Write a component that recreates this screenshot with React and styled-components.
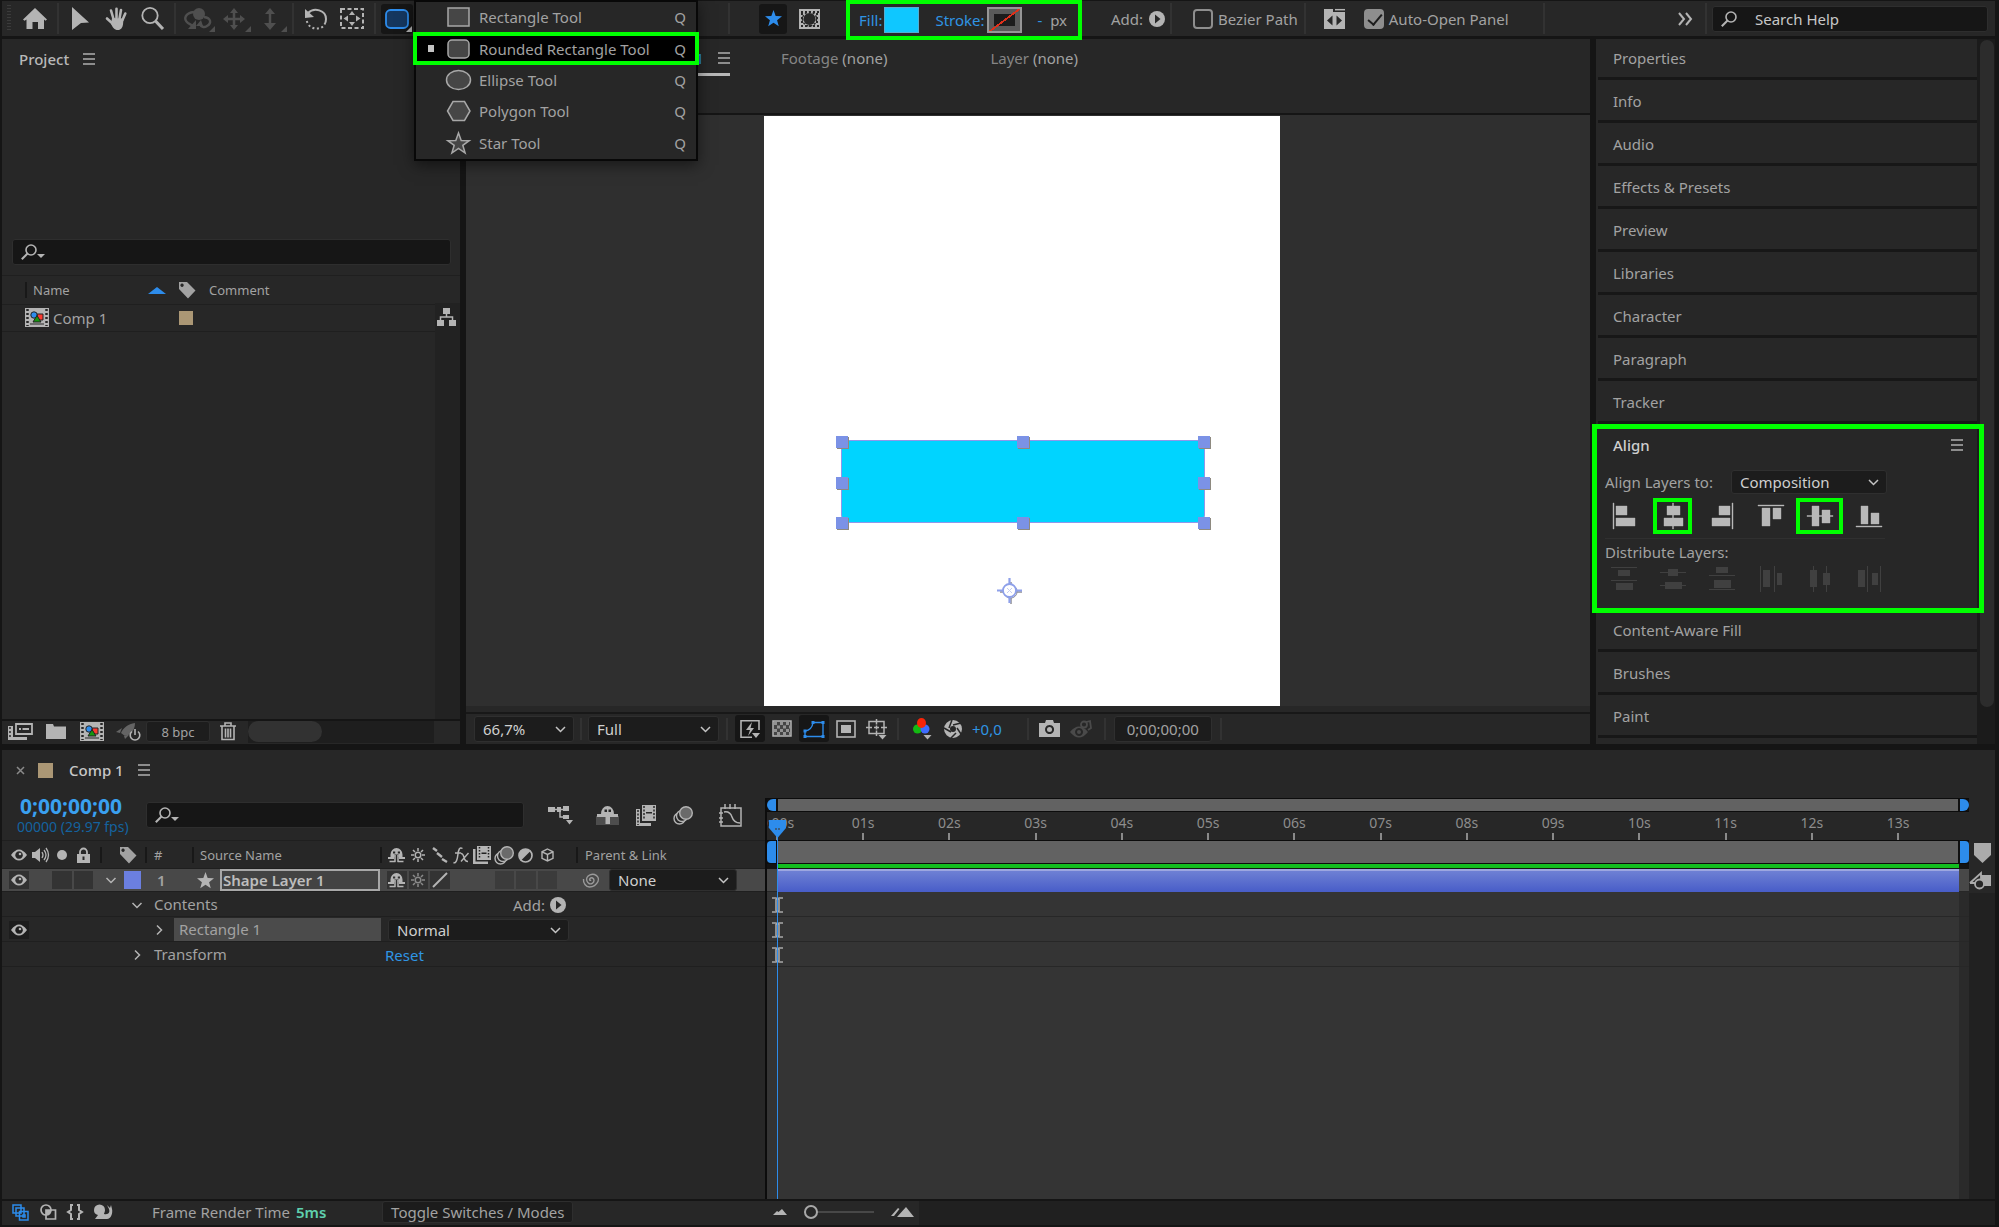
import React, { useState } from 'react';
import styled, { createGlobalStyle, css } from 'styled-components';

const GlobalStyle = createGlobalStyle`
  * { box-sizing: border-box; }
  body { margin: 0; background: #151515; }
  body, button, input, select, table {
    font-family: "Noto Sans", "Open Sans", sans-serif;
    font-size: 15px;
    line-height: 20px;
    color: #a2a2a2;
  }
  button { padding: 0; border: 0; background: none; }
  a { text-decoration: none; }
`;

const BLUE = '#2d8ceb';
const GREEN = '#00ff00';

/* ===== shared parts ===== */

const Svg = styled.svg`
  display: block;
  flex: none;
  overflow: visible;
`;

function Icon({ w, h, children }) {
  return (
    <Svg width={w} height={h} viewBox={`0 0 ${w} ${h}`} fill="currentColor" aria-hidden="true">
      {children}
    </Svg>
  );
}

const Shell = styled.div`
  display: flex;
  flex-direction: column;
  min-height: 100vh;
  padding: 1px 4px 2px 2px;
  background: #151515;
`;

const Panel = styled.section`
  display: flex;
  flex-direction: column;
  background: #272727;
`;

const Frame = css`
  &::after {
    content: '';
    position: absolute;
    pointer-events: none;
    border: 4px solid ${GREEN};
  }
`;

const Swatch = styled.span`
  flex: none;
  width: ${(p) => p.$size}px;
  height: ${(p) => p.$size}px;
  background: #ab9775;
`;

const SelectWrap = styled.span`
  position: relative;
  flex: none;
  width: ${(p) => p.$w}px;
  color: #c4c4c4;

  select {
    display: block;
    appearance: none;
    width: 100%;
    height: ${(p) => p.$h || 24}px;
    padding: 0 24px 0 8px;
    border: 1px solid #2f2f2f;
    border-radius: 3px;
    background: #1c1c1c;
    color: #cfcfcf;
  }
  svg {
    position: absolute;
    right: 8px;
    top: 50%;
    margin-top: -3px;
    pointer-events: none;
  }
`;

function Select({ w, h, label, value }) {
  return (
    <SelectWrap $w={w} $h={h}>
      <select aria-label={label} defaultValue={value}>
        <option>{value}</option>
      </select>
      <Icon w={11} h={7}>
        <path d="M1 1l4.500 4.500L10 1" fill="none" stroke="currentColor" strokeWidth="1.500" />
      </Icon>
    </SelectWrap>
  );
}

const SearchBox = styled.label`
  display: flex;
  align-items: center;
  gap: 16px;
  height: 26px;
  padding-left: 8px;
  border: 1px solid #2e2e2e;
  border-radius: 3px;
  background: #161616;
  color: #b4b4b4;

  input {
    flex: 1;
    min-width: 0;
    height: 22px;
    padding: 0;
    border: 0;
    outline: 0;
    background: none;
    color: #c8c8c8;
  }
  input::placeholder { color: #c8c8c8; opacity: 1; }
`;

const SearchIcon = ({ arrow }) => (
  <Icon w={24} h={16}>
    <circle cx="10" cy="6" r="5" fill="none" stroke="currentColor" strokeWidth="1.600" />
    <path d="M6.500 9.500L.8 15.300" stroke="currentColor" strokeWidth="2" />
    {arrow && <path d="M16 10h8l-4 4z" />}
  </Icon>
);

const MenuButton = styled.button`
  width: ${(p) => p.$w || 12}px;
  color: #b0b0b0;
`;

const Burger = ({ label }) => (
  <MenuButton aria-label={label}>
    <Icon w={12} h={12}>
      <path d="M0 1h12M0 6h12M0 11h12" stroke="currentColor" strokeWidth="1.500" />
    </Icon>
  </MenuButton>
);

const PlayDot = () => (
  <Icon w={16} h={16}>
    <circle cx="8" cy="8" r="8" fill="#b4b4b4" />
    <path d="M6 3.500L11.500 8 6 12.500z" fill="#272727" />
  </Icon>
);

const TagIcon = () => (
  <Icon w={18} h={18}>
    <path fillRule="evenodd" d="M1 1h8l8.500 8.500L10 17.500 1 8zM4 2.500a1.700 1.700 0 1 0 .1 0z" />
  </Icon>
);

const CompIcon = () => (
  <Icon w={24} h={19}>
    <path fill="#b4b4b4" d="M0 0h24v19H0z" />
    <path d="M2.500 1v17M21.500 1v17" stroke="#272727" strokeWidth="2.500" strokeDasharray="2 2" />
    <path fill="#272727" d="M5 15.500h14v1H5z" />
    <path fill="#fb3a30" stroke="#222" d="M12 6h6v6h-6z" />
    <circle cx="9" cy="7" r="3.200" fill={BLUE} stroke="#222" />
    <path fill="#15960f" stroke="#222" d="M12 7.500l4 6.500H8z" />
  </Icon>
);

const FilmIcon = () => (
  <Icon w={18} h={18}>
    <path d="M4 0h14v14H4z" />
    <path d="M0 3h2.500v12.500H15V18H0z" />
    <path d="M6.500 1v12M15.500 1v12" stroke="#222" strokeWidth="1.500" strokeDasharray="1.500 1.500" />
    <path d="M8.500 6.500h5v1.500h-5z" fill="#222" />
  </Icon>
);

const BlurIcon = () => (
  <Icon w={20} h={19}>
    <g stroke="currentColor" strokeWidth="1.400" fill="#272727">
      <circle cx="6.500" cy="12.500" r="5.500" />
      <circle cx="9" cy="10" r="5.500" />
      <circle cx="13" cy="7" r="6.300" fill="#6a6a6a" />
    </g>
  </Icon>
);

const ShyIcon = () => (
  <Icon w={17} h={15}>
    <path fillRule="evenodd" d="M2.500 9V6.500a6 6.500 0 0 1 12 0V9h-4V6.500h-4V9zM5 3.500h2.200v2H5zM9.800 3.500H12v2H9.800z" />
    <path d="M0 9h6v2H0zM11 9h6v2h-6z" />
    <path d="M7 7v7M10 7v7M1.500 13.500h6M9.500 13.500h6" fill="none" stroke="currentColor" strokeWidth="1.500" />
  </Icon>
);

const EyeIcon = () => (
  <Icon w={16} h={12}>
    <path fillRule="evenodd" d="M0 6q8-11 16 0-8 11-16 0zM8 2.200a3.800 3.800 0 1 0 .1 0z" />
    <circle cx="9" cy="5" r="1.300" />
  </Icon>
);

const SunIcon = () => (
  <Icon w={16} h={16}>
    <circle cx="8" cy="8" r="2.800" fill="none" stroke="currentColor" strokeWidth="1.500" />
    <path
      d="M8 1v3M8 12v3M1 8h3M12 8h3M3 3l2 2M11 11l2 2M13 3l-2 2M5 11l-2 2"
      stroke="currentColor" strokeWidth="1.500"
    />
  </Icon>
);

const StarShape = ({ size, ...rest }) => (
  <Icon w={size} h={size}>
    <path
      transform={`scale(${size / 18})`}
      d="M9 0l2.300 6.300 6.700.3-5.200 4.200 1.800 6.500L9 13.600l-5.600 3.700 1.800-6.500L0 6.600l6.700-.3z"
      {...rest}
    />
  </Icon>
);

/* ===== toolbar ===== */

const Toolbar = styled.header`
  display: flex;
  align-items: center;
  height: 35px;
  flex: none;
  background: #272727;
`;

const Grip = styled.span`
  width: 4px;
  height: 27px;
  margin: 0 5px;
  background: repeating-linear-gradient(#3b3b3b 0 1px, #272727 1px 3px);
`;

const Sep = styled.span`
  flex: none;
  width: 2px;
  height: ${(p) => p.$h || 31}px;
  margin: 0 ${(p) => p.$m ?? 4}px;
  background: #323232;
`;

const ToolButton = styled.button`
  position: relative;
  display: flex;
  flex: none;
  align-items: center;
  justify-content: center;
  width: ${(p) => p.$w || 36}px;
  height: ${(p) => p.$h || 30}px;
  border-radius: 3px;
  color: ${(p) => (p.$off ? '#4f4f4f' : '#b4b4b4')};
  background: ${(p) => (p.$on ? '#161616' : 'none')};

  ${(p) => p.$more && css`
    &::after {
      content: '';
      position: absolute;
      right: 1px;
      bottom: 2px;
      border: 3px solid;
      border-color: transparent currentColor currentColor transparent;
    }
  `}
`;

const ShapeTool = styled.div`
  position: relative;
  margin: 0 315px 0 1px;
`;

const ShapeMenu = styled.ul`
  position: absolute;
  z-index: 5;
  top: -4px;
  left: 33px;
  display: flex;
  flex-direction: column;
  width: 284px;
  height: 161px;
  margin: 0;
  padding: 0;
  list-style: none;
  border: 2px solid #080808;
  background: #272727;
  box-shadow: 0 4px 14px rgba(0, 0, 0, 0.5);
`;

const ShapeItem = styled.li`
  position: relative;
  display: flex;
  flex: 1;

  button {
    display: grid;
    grid-template-columns: 20px 23px 1fr auto;
    align-items: center;
    gap: 9px;
    width: 100%;
    padding: 0 10px 0 2px;
    text-align: left;
    color: #a2a2a2;
    background: ${(p) => (p.$on ? '#000' : 'none')};
  }
  ${(p) => p.$on && css`
    ${Frame}
    &::after { inset: -1px -3px; }
  `}
`;

const Bullet = styled.span`
  justify-self: end;
  width: 6px;
  height: 7px;
  margin-right: 4px;
  background: ${(p) => (p.$on ? '#c4c4c4' : 'none')};
`;

const Options = styled.div`
  display: flex;
  align-items: center;
  gap: ${(p) => p.$gap || 6}px;
  margin-left: ${(p) => p.$ml || 0}px;
  white-space: nowrap;
`;

const PaintOptions = styled.div`
  position: relative;
  display: flex;
  align-items: center;
  width: 236px;
  height: 40px;
  margin: 2px 0 0 21px;
  padding-left: 13px;
  z-index: 2;
  ${Frame}
  &::after { inset: 0; }

  a { color: #2f95e4; }
`;

const PaintSwatch = styled.button`
  width: 35px;
  height: 26px;
  margin: 0 16px 0 2px;
  ${(p) => (p.$none
    ? css`
      border: 2px solid #969696;
      background:
        linear-gradient(143deg, transparent 48%, #e0301a 48% 53%, transparent 53%),
        linear-gradient(#1c1c1c, #1c1c1c) center / 21px 12px no-repeat,
        #5a5a5a;
    `
    : css`
      border: 1px solid #53aed0;
      background: #0fc7ff;
    `)}
`;

const Check = styled.label`
  display: flex;
  align-items: center;
  gap: 5px;

  input {
    position: relative;
    appearance: none;
    width: 20px;
    height: 20px;
    margin: 0;
    border: 2px solid #8e8e8e;
    border-radius: 4px;
  }
  input:checked { background: #8e8e8e; }
  input:checked::after {
    content: '';
    position: absolute;
    left: 5px;
    top: 0;
    width: 6px;
    height: 12px;
    border: solid #1d1d1d;
    border-width: 0 2px 2px 0;
    transform: rotate(40deg);
  }
`;

const ToolbarEnd = styled.div`
  display: flex;
  align-items: center;
  margin-left: auto;
  gap: 5px;
`;

const HelpSearch = styled(SearchBox)`
  width: 276px;
  margin: 0 7px 0 0;
  gap: 10px;
`;

const SHAPES = [
  ['Rectangle Tool', <rect x="1" y="1" width="21" height="18" />],
  ['Rounded Rectangle Tool', <rect x="1" y="1" width="21" height="18" rx="4" />],
  ['Ellipse Tool', <ellipse cx="11.500" cy="10" rx="12" ry="9.500" />],
  ['Polygon Tool', <path d="M6 .5h11.500L23 10l-5.500 9.500H6L.5 10z" />],
  ['Star Tool', <path d="M11.500 0l2.700 7.500 8 .2-6.400 4.600 2.300 7.700-6.600-4.500L4.900 20l2.300-7.700L.8 7.700l8-.2z" />],
];

function TopBar() {
  const [shape, setShape] = useState('Rounded Rectangle Tool');

  return (
    <Toolbar>
      <Grip />
      <ToolButton $w={38} aria-label="Home">
        <Icon w={24} h={21}>
          <path d="M12 0l12 11.500-1.500 1.200-1.500-1.200V21h-6v-7H9.500v7h-6v-9.500L1.500 12.700 0 11.500z" />
        </Icon>
      </ToolButton>
      <Sep $m={3} />
      <ToolButton aria-label="Selection">
        <Icon w={18} h={23}><path d="M1 0l17 15.500-8 .5L1 23z" /></Icon>
      </ToolButton>
      <ToolButton aria-label="Hand">
        <Icon w={23} h={23}>
          <path
            d="M8.500 12L6 3.500M11.500 11V1.800M14.500 11.500l1.500-8.500M17.500 13l2.800-6.500M7.500 16.500L2 11.500"
            fill="none" stroke="currentColor" strokeWidth="2.600" strokeLinecap="round"
          />
          <path d="M7 11l11.500.5-.5 6c-.5 3-2 5.500-5 5.500-4 0-5-2.500-7-6z" />
        </Icon>
      </ToolButton>
      <ToolButton aria-label="Zoom">
        <Icon w={23} h={23}>
          <circle cx="9" cy="8.500" r="7.700" fill="none" stroke="currentColor" strokeWidth="1.800" />
          <path d="M14.500 14l7.500 8" stroke="currentColor" strokeWidth="3" />
        </Icon>
      </ToolButton>
      <Sep />
      <ToolButton $off $more aria-label="Orbit camera">
        <Icon w={28} h={22}>
          <circle cx="15" cy="6" r="6" />
          <path d="M10 4C1 5-1 11 4 15l5 3M20 9c7 1 8 6 3 9-3 2-6 1-7-2" fill="none" stroke="currentColor" strokeWidth="2.400" />
          <path d="M12 12v9H4zM12 18l5-6 2 6z" />
        </Icon>
      </ToolButton>
      <ToolButton $off $more aria-label="Pan camera">
        <Icon w={22} h={22}>
          <path d="M11 2v18M2 11h18" stroke="currentColor" strokeWidth="2.500" />
          <path d="M11 0l4 5H7zM11 22l4-5H7zM0 11l5-4v8zM22 11l-5-4v8z" />
        </Icon>
      </ToolButton>
      <ToolButton $off $more aria-label="Dolly camera">
        <Icon w={14} h={22}>
          <path d="M7 3v14" stroke="currentColor" strokeWidth="2.500" />
          <path d="M7 0l5 6H2zM7 22l6-7H1z" />
        </Icon>
      </ToolButton>
      <Sep />
      <ToolButton aria-label="Rotation">
        <Icon w={24} h={22}>
          <path d="M4 5c6-6 18-3 18 6 0 2-.5 4-1.500 5.500" fill="none" stroke="currentColor" strokeWidth="2" />
          <path d="M19 18.500C13 23 3 20 2.500 11" fill="none" stroke="currentColor" strokeWidth="2" strokeDasharray="2 2.500" />
          <path d="M1 1v9l9-1z" />
        </Icon>
      </ToolButton>
      <ToolButton aria-label="Pan behind">
        <Icon w={24} h={21}>
          <rect x="1" y="1" width="22" height="19" fill="none" stroke="currentColor" strokeWidth="2" strokeDasharray="4 2.500" />
          <path d="M12 3l3 4H9zM12 18l3-4H9zM3.500 10.500L8 7.500v6zM20.500 10.500L16 7.500v6z" />
        </Icon>
      </ToolButton>
      <Sep />
      <ShapeTool>
        <ToolButton $on $more $w={32} aria-label="Shape tool">
          <Icon w={22} h={20}>
            <rect x="0" y="1" width="22" height="18" rx="4.500" fill="#15375f" stroke={BLUE} strokeWidth="1.800" />
          </Icon>
        </ToolButton>
        <ShapeMenu>
          {SHAPES.map(([name, drawing]) => (
            <ShapeItem key={name} $on={shape === name}>
              <button onClick={() => setShape(name)}>
                <Bullet $on={shape === name} />
                <Icon w={23} h={20}>
                  <g fill="#464646" stroke="#a8a8a8" strokeWidth="1.500">{drawing}</g>
                </Icon>
                <span>{name}</span>
                <span>Q</span>
              </button>
            </ShapeItem>
          ))}
        </ShapeMenu>
      </ShapeTool>

      <Sep $m={0} />
      <Options $ml={29}>
        <ToolButton $on $w={28} aria-label="Tool creates shape">
          <StarShape size={17} fill={BLUE} />
        </ToolButton>
        <ToolButton $w={32} aria-label="Tool creates mask">
          <Icon w={21} h={20}>
            <path d="M0 0h21v20H0z" />
            <path d="M2 3h18M2 17h18" stroke="#272727" strokeWidth="2" strokeDasharray="2 2" />
            <path d="M3 4v12M18 4v12" stroke="#272727" strokeWidth="2" strokeDasharray="2 2" />
            <circle cx="10.500" cy="10" r="6" fill="#272727" />
            <circle cx="10.500" cy="10" r="7" fill="none" stroke="#272727" strokeWidth="1.500" strokeDasharray="2 2" />
          </Icon>
        </ToolButton>
      </Options>
      <PaintOptions>
        <a href="#fill">Fill:</a>
        <PaintSwatch aria-label="Fill colour" />
        <a href="#stroke">Stroke:</a>
        <PaintSwatch $none aria-label="Stroke colour" />
        <a href="#width">-</a>&nbsp;&nbsp;px
      </PaintOptions>
      <Options $ml={29}>
        Add:
        <ToolButton $w={16} aria-label="Add"><PlayDot /></ToolButton>
      </Options>
      <Options $ml={5} $gap={21}>
        <Sep $m={0} />
        <Check><input type="checkbox" />Bezier Path</Check>
      </Options>
      <Options $ml={6} $gap={18}>
        <Sep $m={0} />
        <ToolButton $w={22} aria-label="Open panel">
          <Icon w={21} h={20}>
            <path fillRule="evenodd" d="M0 0h9v3h12v17H0zM8.500 6.500L3 11.500l5.500 5zM12.500 6.500v10l5.500-5z" />
            <path d="M11 .7h10" stroke="currentColor" strokeWidth="1.500" />
          </Icon>
        </ToolButton>
        <Check><input type="checkbox" defaultChecked />Auto-Open Panel</Check>
      </Options>
      <Options $ml={34}><Sep $m={0} /></Options>
      <ToolbarEnd>
        <ToolButton $w={18} aria-label="More workspaces">
          <Icon w={14} h={12}>
            <path d="M1 0l5 6-5 6M8 0l5 6-5 6" fill="none" stroke="currentColor" strokeWidth="2" />
          </Icon>
        </ToolButton>
        <Options $ml={6}><Sep $m={0} /></Options>
        <HelpSearch>
          <SearchIcon />
          <input type="search" aria-label="Search Help" placeholder="Search Help" />
        </HelpSearch>
      </ToolbarEnd>
    </Toolbar>
  );
}

/* ===== project panel ===== */

const Workspace = styled.main`
  display: flex;
  gap: 6px;
  margin: 3px 0 6px;
`;

const ProjectPanel = styled(Panel)`
  flex: none;
  width: 458px;
`;

const PanelTitle = styled.h2`
  display: flex;
  align-items: center;
  gap: 14px;
  height: 39px;
  margin: 0;
  padding-left: 17px;
  font-size: 15px;
  font-weight: 500;
  color: #b8b8b8;
`;

const ProjectSearch = styled(SearchBox)`
  margin: 161px 9px 10px 10px;
`;

const ProjectList = styled.div`
  display: flex;
  flex: 1;
  border-top: 1px solid #1f1f1f;
`;

const ProjectTable = styled.table`
  flex: 1;
  align-self: flex-start;
  border-collapse: collapse;
  table-layout: fixed;

  th {
    height: 28px;
    padding: 1px 0 0 8px;
    font-size: 13px;
    font-weight: 400;
    text-align: left;
  }
  td { height: 27px; padding: 0 0 0 8px; }
  tr { border-bottom: 1px solid #1f1f1f; }
  th:nth-child(1), td:nth-child(1) { width: 169px; padding-left: 23px; }
  th:nth-child(2), td:nth-child(2) { width: 30px; padding-left: 8px; }
  th:nth-child(2) { padding-left: 7px; }
`;

const HeadCell = styled.span`
  display: flex;
  align-items: center;
  justify-content: space-between;
  height: 16px;
  padding: 0 5px 0 6px;
  border-left: 2px solid #181818;
`;

const ItemName = styled.span`
  display: flex;
  align-items: center;
  gap: 4px;
`;

const FlowColumn = styled.div`
  width: 25px;
  padding: 32px 0 0 2px;
  color: #b4b4b4;
  background: linear-gradient(#272727 27px, #222 27px);
`;

const ProjectFooter = styled.footer`
  display: flex;
  align-items: center;
  height: 25px;
  padding-bottom: 2px;
  border-top: 2px solid #151515;
`;

const FootIcon = styled.button`
  display: flex;
  justify-content: center;
  width: ${(p) => p.$w || 36}px;
  color: #b4b4b4;
`;

const DepthButton = styled.button`
  width: 64px;
  height: 21px;
  border: 1px solid #2e2e2e;
  border-radius: 3px;
  background: #1d1d1d;
  font-size: 13px;
`;

const ScrollTrack = styled.div`
  flex: 1;
  height: 22px;
  margin: 0 26px 0 2px;
  background: #1e1e1e;
`;

const ScrollThumb = styled.div`
  width: 40%;
  height: 21px;
  border-radius: 11px;
  background: #323232;
`;

function Project() {
  return (
    <ProjectPanel>
      <PanelTitle>Project <Burger label="Project menu" /></PanelTitle>
      <ProjectSearch>
        <SearchIcon arrow />
        <input type="search" aria-label="Search project" />
      </ProjectSearch>
      <ProjectList>
        <ProjectTable>
          <thead>
            <tr>
              <th>
                <HeadCell>Name<Icon w={18} h={7}><path d="M0 7l9-7 9 7z" fill={BLUE} /></Icon></HeadCell>
              </th>
              <th aria-label="Label"><TagIcon /></th>
              <th>Comment</th>
            </tr>
          </thead>
          <tbody>
            <tr>
              <td><ItemName><CompIcon />Comp 1</ItemName></td>
              <td><Swatch as="div" $size={14} /></td>
              <td />
            </tr>
          </tbody>
        </ProjectTable>
        <FlowColumn>
          <Icon w={19} h={18}>
            <path d="M6 0h7v6H6zM0 12h7v6H0zM12 12h7v6h-7z" />
            <path d="M9.500 6v3M3.500 12V9h12v3" fill="none" stroke="currentColor" strokeWidth="1.500" />
          </Icon>
        </FlowColumn>
      </ProjectList>
      <ProjectFooter>
        <FootIcon aria-label="Interpret footage">
          <Icon w={25} h={17}>
            <path d="M8 1h16v10H8z" fill="none" stroke="currentColor" strokeWidth="1.800" />
            <path d="M11 5h2v2h-2zM14.500 5H21v2h-6.500z" />
            <path d="M0 3h5v11h14v3H0z" />
            <path d="M2 4v12" stroke="#272727" strokeWidth="1.500" strokeDasharray="2 2" />
          </Icon>
        </FootIcon>
        <FootIcon aria-label="New folder">
          <Icon w={20} h={15}><path d="M0 0h7l1 2.500h12V15H0z" /></Icon>
        </FootIcon>
        <FootIcon aria-label="New composition"><CompIcon /></FootIcon>
        <FootIcon aria-label="Project settings">
          <Icon w={24} h={18}>
            <path d="M19 0C12 1 7 5 5 10l4 3c6-1 10-6 10-13zM0 9l6-4-2 5zM9 16l-1-3 5-1z" fill="#646464" />
            <path d="M16 8.500a4.800 4.800 0 1 0 6 0M19 6v6" fill="none" stroke="currentColor" strokeWidth="1.600" />
          </Icon>
        </FootIcon>
        <DepthButton>8 bpc</DepthButton>
        <FootIcon aria-label="Delete">
          <Icon w={16} h={19}>
            <path d="M0 4h16M5 4V1h6v3M2 4v13.500h12V4M5.500 6.500v9M8 6.500v9M10.500 6.500v9" fill="none" stroke="currentColor" strokeWidth="1.600" />
          </Icon>
        </FootIcon>
        <ScrollTrack><ScrollThumb /></ScrollTrack>
      </ProjectFooter>
    </ProjectPanel>
  );
}

/* ===== composition viewer ===== */

const CompPanel = styled(Panel)`
  flex: 1;
  min-width: 0;
`;

const CompTabs = styled.nav`
  display: flex;
  align-items: flex-start;
  height: 76px;
  border-bottom: 2px solid #151515;
`;

const CompTab = styled.div`
  display: flex;
  align-items: center;
  justify-content: flex-end;
  gap: 14px;
  width: 264px;
  height: 37px;
  padding-top: 3px;
  border-bottom: 3px solid #b8b8b8;
  color: ${BLUE};
`;

const SideTab = styled.button`
  height: 38px;
  margin-left: ${(p) => p.$ml}px;
  color: #858585;

  b { font-weight: 400; color: #a2a2a2; }
`;

const Viewer = styled.div`
  display: flex;
  justify-content: center;
  padding: 1px 12px 0 0;
  background: #2f2f2f;
`;

const Canvas = styled.div`
  position: relative;
  width: 516px;
  height: 590px;
  background: #fff;
`;

const ShapeBox = styled.div`
  position: absolute;
  left: 77px;
  top: 324px;
  width: 364px;
  height: 83px;
  border: 1px solid #8f97ea;
  border-radius: 0 0 8px 8px;
  background: #00d4ff;
`;

const Handle = styled.i`
  position: absolute;
  left: ${(p) => p.$x}%;
  top: ${(p) => p.$y}%;
  width: 12px;
  height: 12px;
  margin: -5px 0 0 -6px;
  background: #7b92e6;
  box-shadow: 1px 1px 0 #8e8a80;
`;

const AnchorPoint = styled.div`
  position: absolute;
  left: 233px;
  top: 462px;
`;

const ViewFooter = styled.footer`
  display: flex;
  align-items: center;
  height: 38px;
  padding: 7px 0 0 8px;
  background: linear-gradient(#272727 6px, #181818 6px 8px, #272727 8px);
`;

const ViewButton = styled.button`
  display: flex;
  flex: none;
  align-items: center;
  justify-content: center;
  width: ${(p) => p.$w || 30}px;
  height: 27px;
  border-radius: 3px;
  color: ${(p) => (p.$off ? '#4a4a4a' : '#b4b4b4')};
  background: ${(p) => (p.$on ? '#161616' : 'none')};
`;

const Exposure = styled.a`
  margin: 0 20px 0 4px;
  color: #2f95e4;
`;

const TimeBox = styled.button`
  width: 98px;
  height: 26px;
  border: 1px solid #2f2f2f;
  border-radius: 3px;
  background: #1c1c1c;
`;

const HANDLES = [[0, 0], [50, 0], [100, 0], [0, 50], [100, 50], [0, 100], [50, 100], [100, 100]];

function Composition() {
  return (
    <CompPanel>
      <CompTabs>
        <CompTab>1 <Burger label="Composition menu" /></CompTab>
        <SideTab $ml={51}>Footage <b>(none)</b></SideTab>
        <SideTab $ml={103}>Layer <b>(none)</b></SideTab>
      </CompTabs>
      <Viewer>
        <Canvas>
          <ShapeBox>
            {HANDLES.map(([x, y]) => <Handle key={`${x}-${y}`} $x={x} $y={y} />)}
          </ShapeBox>
          <AnchorPoint>
            <Icon w={26} h={26}>
              <path d="M14 4v5M18 14h7M14 20v6M3 14h4" stroke="#8f8f96" strokeWidth="1.500" />
              <circle cx="13.600" cy="13.600" r="6.500" fill="none" stroke="#8f8f96" />
              <circle cx="12.500" cy="12.500" r="6.500" fill="#fff" stroke="#8ea0ea" strokeWidth="1.800" />
              <path d="M12.500 0v6M12.500 19v6M0 12.500h6M19 12.500h6" stroke="#8ea0ea" strokeWidth="2.200" />
              <path d="M10 10l5 5M15 10l-5 5" stroke="#c5cdf3" />
            </Icon>
          </AnchorPoint>
        </Canvas>
      </Viewer>
      <ViewFooter>
        <Select w={100} h={26} label="Magnification" value="66,7%" />
        <Sep $m={6} $h={22} />
        <Select w={131} h={26} label="Resolution" value="Full" />
        <Sep $m={7} $h={22} />
        <ViewButton $on aria-label="Fast previews">
          <Icon w={20} h={18}>
            <path d="M19 10V.8H1v16.500h11" fill="none" stroke="currentColor" strokeWidth="1.600" />
            <path d="M12 2L6 10h4l-2 6 6-8h-3.500zM12 13h8l-4 5z" />
          </Icon>
        </ViewButton>
        <ViewButton $w={34} aria-label="Transparency grid">
          <Icon w={20} h={17}>
            <rect x="1" y="1" width="18" height="15" fill="#454545" stroke="currentColor" strokeWidth="1.500" />
            <path d="M2 3.500h16M2 10.500h16" stroke="currentColor" strokeWidth="3" strokeDasharray="3 3" opacity=".7" />
            <path d="M5 7h13M5 13.500h13" stroke="currentColor" strokeWidth="3" strokeDasharray="3 3" opacity=".7" />
          </Icon>
        </ViewButton>
        <ViewButton $on aria-label="Mask visibility">
          <Icon w={22} h={18}>
            <g stroke={BLUE} fill={BLUE}>
              <path d="M2 16.500V11q7-1 8-8.500h10v14z" fill="none" strokeWidth="1.400" />
              <path d="M.5 15h3v3h-3zM18.500 15h3v3h-3zM18.500 1h3v3h-3zM8.500 1h3v3h-3zM.5 9.500h3v3h-3z" stroke="none" />
            </g>
          </Icon>
        </ViewButton>
        <ViewButton $w={34} aria-label="Region of interest">
          <Icon w={20} h={18}>
            <rect x="1" y="1" width="18" height="16" fill="none" stroke="currentColor" strokeWidth="1.600" />
            <path d="M5 5h10v8H5z" />
          </Icon>
        </ViewButton>
        <ViewButton $w={28} aria-label="Grid and guides">
          <Icon w={22} h={20}>
            <rect x="3" y="2.500" width="15" height="12" fill="none" stroke="currentColor" strokeWidth="1.500" />
            <path d="M10.500 0v5.500M10.500 11.500V17M0 8.500h6M15 8.500h6M8 8.500h5M10.500 6.500v4" stroke="currentColor" strokeWidth="1.500" />
            <path d="M12.500 16h8l-4 4.500z" />
          </Icon>
        </ViewButton>
        <Sep $m={6} $h={22} />
        <ViewButton $w={33} aria-label="Channels">
          <Icon w={17} h={21}>
            <circle cx="4.500" cy="11" r="4.500" fill="#13ba12" />
            <circle cx="12" cy="11" r="4.500" fill="#3e6cff" />
            <ellipse cx="8.500" cy="5" rx="4.500" ry="5" fill="#f82408" />
            <path d="M10.500 17h8l-4 4.500z" />
          </Icon>
        </ViewButton>
        <ViewButton aria-label="Reset exposure">
          <Icon w={18} h={18}>
            <circle cx="9" cy="9" r="6" fill="none" stroke="currentColor" strokeWidth="6" />
            <path d="M5 8L8 0M9 5l8-2M13 8l4 6M12 13l-5 5M7 12L0 8" stroke="#272727" strokeWidth="1.500" />
          </Icon>
        </ViewButton>
        <Exposure href="#exposure">+0,0</Exposure>
        <Sep $m={5} $h={22} />
        <ViewButton $w={32} aria-label="Snapshot">
          <Icon w={21} h={17}>
            <path fillRule="evenodd" d="M0 3h6l1-3h7l1 3h6v14H0zM10.500 5a4.500 4.500 0 1 0 .1 0z" />
            <circle cx="10.500" cy="9.500" r="2.500" />
          </Icon>
        </ViewButton>
        <ViewButton $off aria-label="Show snapshot">
          <Icon w={22} h={18}>
            <path fillRule="evenodd" d="M0 12q9-11 18 0-9 11-18 0zM9 8a4 4 0 1 0 .1 0z" />
            <circle cx="9" cy="12" r="2" />
            <circle cx="14" cy="4.500" r="3" fill="none" stroke="currentColor" strokeWidth="1.800" />
            <path d="M16 2l4-1 1 7-3 2" fill="none" stroke="currentColor" strokeWidth="1.800" />
          </Icon>
        </ViewButton>
        <Sep $m={8} $h={22} />
        <TimeBox>0;00;00;00</TimeBox>
        <Sep $m={8} $h={22} />
      </ViewFooter>
    </CompPanel>
  );
}

/* ===== right hand panels ===== */

const SideStack = styled.aside`
  display: flex;
  flex: none;
  width: 399px;
  background: #1b1b1b;
`;

const SideList = styled(Panel)`
  flex: 1;
  padding: 0 0 0 2px;
`;

const SideRow = styled.button`
  display: flex;
  align-items: flex-end;
  flex: none;
  height: 43px;
  padding: 0 0 9px 15px;
  border-bottom: 3px solid #171717;

  &:first-child { height: 41px; }
`;

const AlignPanel = styled.div`
  position: relative;
  height: 185px;
  padding: 11px 0 0 7px;
  ${Frame}
  &::after { inset: 0 -7px -4px -6px; border-width: 5px; }
`;

const AlignTitle = styled.h2`
  display: flex;
  justify-content: space-between;
  margin: 0 14px 15px 8px;
  font-size: 15px;
  font-weight: 500;
  color: #cfcfcf;
`;

const AlignRow = styled.label`
  display: flex;
  align-items: center;
  justify-content: space-between;
  width: 282px;
`;

const AlignIcons = styled.div`
  display: grid;
  grid-template-columns: repeat(6, 49px);
  width: 294px;
  margin-left: -6px;
  color: ${(p) => (p.$off ? '#404040' : '#b8b8b8')};
`;

const AlignButton = styled.button`
  position: relative;
  display: flex;
  align-items: center;
  justify-content: center;
  height: ${(p) => p.$h || 44}px;
  color: inherit;
  ${(p) => p.$frame && css`
    ${Frame}
    &::after { inset: 4px ${p.$frame}px; }
  `}
`;

const DistributeLabel = styled.div`
  width: 280px;
  padding-top: 3px;
  border-top: 1px solid #303030;
`;

const SideScroll = styled.div`
  width: 18px;
  padding: 1px 1px 37px 3px;

  &::before {
    content: '';
    display: block;
    height: 100%;
    border-radius: 7px;
    background: #2c2c2c;
  }
`;

const ALIGN = [
  ['Left', 'M2 0h1v26H2zM5 3h11v9H5zM5 15h19v8H5z'],
  ['Horizontal centre', 'M12.500 0h1v26h-1zM7 3h13v9H7zM4 15h19v8H4z', 5],
  ['Right', 'M23 0h1v26h-1zM10 3h11v9H10zM3 15h18v8H3z'],
  ['Top', 'M0 2h26v1H0zM4 5h8v18H4zM15 5h8v11h-8z'],
  ['Vertical centre', 'M0 12.500h26v1H0zM5 3h7v20H5zM15 7h8v13h-8z', 1],
  ['Bottom', 'M0 23h26v1H0zM5 3h7v18H5zM15 10h8v11h-8z'],
];

const DISTRIBUTE = [
  ['top', 'M0 1h26v1H0zM7 4h12v6H7zM0 14h26v1H0zM5 17h17v7H5z'],
  ['vertical centre', 'M0 6h26v1H0zM8 3h10v7H8zM0 19h26v1H0zM5 16h17v7H5z'],
  ['bottom', 'M7 1h12v6H7zM0 9h26v1H0zM5 14h17v8H5zM0 23h26v1H0z'],
  ['left', 'M2 0h1v26H2zM5 4h7v17H5zM16 0h1v26h-1zM19 7h5v12h-5z'],
  ['horizontal centre', 'M6 0h1v26H6zM3 4h7v17H3zM19 0h1v26h-1zM16 7h7v12h-7z'],
  ['right', 'M2 4h7v17H2zM11 0h1v26h-1zM16 7h6v12h-6zM24 0h1v26h-1z'],
];

function SidePanels() {
  const top = ['Properties', 'Info', 'Audio', 'Effects & Presets', 'Preview', 'Libraries', 'Character', 'Paragraph', 'Tracker'];
  return (
    <SideStack>
      <SideList>
        {top.map((name) => <SideRow key={name}>{name}</SideRow>)}
        <AlignPanel>
          <AlignTitle>Align <Burger label="Align menu" /></AlignTitle>
          <AlignRow>
            Align Layers to:
            <Select w={156} label="Align Layers to" value="Composition" />
          </AlignRow>
          <AlignIcons>
            {ALIGN.map(([name, d, frame]) => (
              <AlignButton key={name} aria-label={`Align ${name}`} $frame={frame}>
                <Icon w={26} h={26}><path d={d} stroke="currentColor" strokeWidth=".4" /></Icon>
              </AlignButton>
            ))}
          </AlignIcons>
          <DistributeLabel>Distribute Layers:</DistributeLabel>
          <AlignIcons $off>
            {DISTRIBUTE.map(([name, d]) => (
              <AlignButton key={name} $h={34} disabled aria-label={`Distribute ${name}`}>
                <Icon w={26} h={26}><path d={d} /></Icon>
              </AlignButton>
            ))}
          </AlignIcons>
        </AlignPanel>
        <SideRow>Content-Aware Fill</SideRow>
        <SideRow>Brushes</SideRow>
        <SideRow>Paint</SideRow>
      </SideList>
      <SideScroll />
    </SideStack>
  );
}

/* ===== timeline ===== */

const TimelinePanel = styled(Panel)`
  flex: 1;
`;

const TimelineTab = styled.div`
  display: flex;
  align-items: center;
  gap: 13px;
  height: 42px;
  padding: 0 0 2px 15px;
  color: #c8c8c8;

  strong { margin: 0 1px 0 3px; font-weight: 500; }
`;

const TimelineBody = styled.div`
  display: flex;
  flex: 1;
`;

const Outline = styled.div`
  flex: none;
  width: 763px;
`;

const Controls = styled.div`
  display: flex;
  align-items: center;
  height: 49px;
  padding-bottom: 2px;
  border-bottom: 1px solid #1f1f1f;
  color: #b4b4b4;
`;

const Timecode = styled.div`
  width: 144px;
  padding-left: 15px;

  a {
    display: block;
    padding-left: 3px;
    font-size: 21px;
    line-height: 24px;
    font-weight: 700;
    color: #3aa0f0;
  }
  span {
    display: block;
    font-size: 14px;
    line-height: 18px;
    white-space: nowrap;
    color: #14639f;
  }
`;

const LayerSearch = styled(SearchBox)`
  flex: 1;
`;

const ControlButtons = styled.div`
  display: grid;
  grid-template-columns: 48px 39px 37px 37px 64px;
  width: 225px;
  margin-left: 16px;
`;

const SwitchButton = styled.button`
  display: flex;
  align-items: center;
  justify-content: center;
  height: 24px;
  color: #b4b4b4;

  &:first-child { justify-content: flex-start; padding-left: 8px; }
  &:last-child { padding-right: 4px; }
`;

/* every outline row shares these columns: av, label, number, name, switches, parent */
const Row = styled.div`
  display: grid;
  grid-template-columns: 98px 45px 47px 188px 196px 1fr;
  align-items: center;
  height: ${(p) => p.$h || 25}px;
  border-bottom: 1px solid #1f1f1f;
  background: ${(p) => (p.$on ? '#484848' : 'none')};
`;

const HeadRow = styled(Row)`
  height: 28px;
  padding-top: 1px;
`;

const ColHead = styled.div`
  display: flex;
  align-items: center;
  height: 16px;
  padding-left: ${(p) => p.$pl ?? 7}px;
  border-left: 2px solid #181818;
  font-size: 13px;
`;

const LayerNumber = styled.strong`
  padding-left: 12px;
  font-weight: 600;
`;

const AvCells = styled.div`
  display: grid;
  grid-template-columns: repeat(4, 1fr);
  width: 86px;
  margin-left: 6px;
`;

const SwitchCells = styled.div`
  display: grid;
  grid-template-columns: repeat(8, 1fr);
  width: 172px;
  margin-left: ${(p) => p.$ml || 4}px;
`;

const Cell = styled.span`
  display: flex;
  flex: none;
  align-items: center;
  justify-content: center;
  height: 18px;
  margin: 0 1px;
  color: ${(p) => (p.$dim ? '#8a8a8a' : '#b4b4b4')};
  background: ${(p) => p.$bg || 'none'};
`;

const LabelCell = styled.div`
  display: flex;
  align-items: center;
  justify-content: flex-end;
  gap: 6px;
  padding-right: 4px;
`;

const Bar = styled.span`
  width: 17px;
  height: 18px;
  background: #6b7fe0;
`;

const LayerName = styled.div`
  display: flex;
  align-items: center;
  gap: 6px;
  margin-left: 5px;
  color: #b4b4b4;

  input {
    flex: 1;
    min-width: 0;
    height: 22px;
    padding: 0 0 0 1px;
    border: 2px solid #a8a8a8;
    background: #434343;
    font-weight: 600;
    color: #bdbdbd;
  }
`;

const Parent = styled.div`
  display: flex;
  align-items: center;
  gap: 9px;
  padding-left: 6px;
`;

const Twirl = styled.button`
  display: flex;
  align-items: center;
  justify-content: center;
  width: 14px;
  height: 18px;
  color: #b4b4b4;
`;

const PropRow = styled.div`
  display: flex;
  align-items: center;
  height: 25px;
  padding: 1px 0 0 6px;
  border-bottom: 1px solid #1f1f1f;
`;

const PropEye = styled.div`
  width: 22px;
`;

const PropName = styled.div`
  display: flex;
  align-items: center;
  gap: 8px;
  width: ${(p) => (p.$deep ? 229 : 247)}px;
  margin-left: ${(p) => (p.$deep ? 122 : 122)}px;

  span {
    flex: 1;
    padding: 1px 0 2px ${(p) => (p.$deep ? 5 : 2)}px;
    background: ${(p) => (p.$on ? '#4b4b4b' : 'none')};
  }
`;

const PropValue = styled.div`
  display: flex;
  align-items: center;
  justify-content: ${(p) => (p.$end ? 'flex-end' : 'flex-start')};
  gap: 5px;
  width: 182px;
  margin-left: 7px;

  a { padding-left: 1px; color: #2f95e4; }
`;

const Tracks = styled.div`
  position: relative;
  display: flex;
  flex: 1;
  flex-direction: column;
  min-width: 0;
  margin-top: 6px;
  border-left: 2px solid #0c0c0c;
`;

const NavBar = styled.div`
  display: flex;
  gap: 2px;
  height: ${(p) => p.$h}px;
  border: solid #0c0c0c;
  border-width: 1px 0;
  background: #101010;

  &::before, &::after {
    content: '';
    flex: none;
    width: 9px;
    background: ${BLUE};
    border-radius: ${(p) => p.$r}px 0 0 ${(p) => p.$r}px;
  }
  &::after { border-radius: 0 ${(p) => p.$r}px ${(p) => p.$r}px 0; }
  span { flex: 1; background: #626262; }
`;

const Ruler = styled.div`
  height: 28px;
  padding: 1px 10px 0;
  overflow: hidden;
`;

const Ticks = styled.div`
  display: grid;
  grid-template-columns: repeat(14, 7.04%);
  margin-left: -3.65%;
  font-size: 14px;
  text-align: center;
  color: #8d8d8d;
`;

const Tick = styled.span`
  &::after {
    content: '';
    display: block;
    width: 2px;
    height: 7px;
    margin: 0 auto;
    background: #8a8a8a;
  }
`;

const TrackRow = styled.div`
  height: ${(p) => p.$h || 25}px;
  padding: 0 10px;
  border-bottom: 1px solid #272727;
  background: ${(p) => (p.$on ? '#484848' : 'none')};
`;

const Rendered = styled.div`
  height: 5px;
  padding: 0 10px 1px;
  background: #131313;

  &::before {
    content: '';
    display: block;
    height: 4px;
    background: #12bd1f;
  }
`;

const LayerBar = styled.div`
  height: 23px;
  border-top: 2px solid #9ca6e0;
  background: linear-gradient(#6e80d4, #485dc8);
`;

const TrackArea = styled.div`
  flex: 1;
  background: linear-gradient(to left, #2a2a2a 10px, #343434 10px);
`;

const KeyMark = styled.span`
  display: flex;
  align-items: center;
  height: 25px;
  margin-left: -5px;
  color: #a8a8a8;
`;

const Playhead = styled.div`
  position: absolute;
  left: 2px;
  top: 22px;
  bottom: 0;
  width: 17px;

  &::after {
    content: '';
    position: absolute;
    left: 8px;
    top: 8px;
    bottom: 0;
    width: 1px;
    background: ${BLUE};
  }
`;

const Margin = styled.div`
  flex: none;
  width: 26px;
  padding-top: 51px;
  color: #ababab;
  background: linear-gradient(#272727 101px, #212121 101px);
`;

const MarkerButton = styled.button`
  display: flex;
  width: 22px;
  height: 29px;
  justify-content: flex-end;
  color: inherit;
`;

const StatusBar = styled.footer`
  display: flex;
  align-items: center;
  flex: none;
  height: 26px;
  padding: 0 0 2px 5px;
  border-top: 2px solid #151515;
  background: linear-gradient(to right, #272727 917px, #202020 917px);
`;

const RenderTime = styled.span`
  margin: 0 56px 0 34px;

  strong { margin-left: 2px; font-weight: 600; color: #5fd0ae; }
`;

const ToggleButton = styled.button`
  width: 191px;
  height: 22px;
  margin-right: 200px;
  border: 1px solid #2e2e2e;
  border-radius: 3px;
  background: #1c1c1c;
`;

const ZoomSlider = styled.input`
  appearance: none;
  width: 70px;
  height: 16px;
  margin: 0 17px;
  background: linear-gradient(#484848, #484848) center / 100% 2px no-repeat;

  &::-webkit-slider-thumb {
    appearance: none;
    width: 14px;
    height: 14px;
    border: 2px solid #a8a8a8;
    border-radius: 50%;
    background: #272727;
  }
`;

const Chevron = ({ open }) => (
  <Twirl aria-label={open ? 'Collapse' : 'Expand'}>
    <Icon w={10} h={10}>
      <path d={open ? 'M.5 3L5 7.500 9.500 3' : 'M3 .5L7.500 5 3 9.500'} fill="none" stroke="currentColor" strokeWidth="1.500" />
    </Icon>
  </Twirl>
);

function LayerOutline() {
  return (
    <Outline>
      <Controls>
        <Timecode>
          <a href="#time">0;00;00;00</a>
          <span>00000 (29.97 fps)</span>
        </Timecode>
        <LayerSearch>
          <SearchIcon arrow />
          <input type="search" aria-label="Search layers" />
        </LayerSearch>
        <ControlButtons>
          <SwitchButton aria-label="Mini flowchart">
            <Icon w={24} h={18}>
              <path d="M0 1h7v5H0zM9 1h4v5H9zM15 0h6v5h-6zM15 9h6v4h-6zM18 14h7l-3.500 4.500z" />
              <path d="M6 3.500h9M12 3.500V11h4" fill="none" stroke="currentColor" strokeWidth="1.500" />
            </Icon>
          </SwitchButton>
          <SwitchButton aria-label="Hide shy layers">
            <Icon w={23} h={19}>
              <path d="M0 10h23v9H0z" fill="#4d4d4d" />
              <path fillRule="evenodd" d="M5 8a6.500 8 0 0 1 13 0zM8.500 3.500H11V6H8.500zM12.500 3.500H15V6h-2.500z" />
              <path d="M1 8h21v3H1zM9.500 10h4.500v8H9.500z" />
            </Icon>
          </SwitchButton>
          <SwitchButton aria-label="Frame blending">
            <Icon w={21} h={21}>
              <path d="M7 0h14v16H7z" />
              <path d="M1 4h4v14h11v3H1z" />
              <path d="M9 1v14M19 1v14M3 5v15" stroke="#272727" strokeWidth="1.500" strokeDasharray="2 1.500" />
              <path d="M11 7h6v1.500h-6z" fill="#272727" />
            </Icon>
          </SwitchButton>
          <SwitchButton aria-label="Motion blur"><BlurIcon /></SwitchButton>
          <SwitchButton aria-label="Graph editor">
            <Icon w={24} h={23}>
              <path d="M2 4h20v18H2zM5 8q6-1 8 5t8 6M0 9h4M0 14h4M0 18h4M6 0v5M11 0v5M16 0v5" fill="none" stroke="currentColor" strokeWidth="1.500" />
            </Icon>
          </SwitchButton>
        </ControlButtons>
      </Controls>

      <HeadRow>
        <AvCells>
          <Cell><EyeIcon /></Cell>
          <Cell>
            <Icon w={17} h={14}>
              <path d="M0 4h3l5-4v14l-5-4H0z" />
              <path d="M10 4q2 3 0 6M12 2q4 5 0 10M14 0q5 7 0 14" fill="none" stroke="currentColor" strokeWidth="1.300" />
            </Icon>
          </Cell>
          <Cell><Icon w={10} h={10}><circle cx="5" cy="5" r="5" /></Icon></Cell>
          <Cell>
            <Icon w={13} h={15}>
              <path fillRule="evenodd" d="M0 6h13v9H0zM5.500 8.500h2V12h-2z" />
              <path d="M3 7V4a3.500 3.500 0 0 1 7 0v3" fill="none" stroke="currentColor" strokeWidth="1.800" />
            </Icon>
          </Cell>
        </AvCells>
        <ColHead $pl={17}><TagIcon /></ColHead>
        <ColHead>#</ColHead>
        <ColHead $pl={6}>Source Name</ColHead>
        <ColHead $pl={0}>
          <SwitchCells>
            <Cell><ShyIcon /></Cell>
            <Cell><SunIcon /></Cell>
            <Cell><Icon w={14} h={14}><path d="M0 0l4 3M4 5l5 4M9 11l5 3" stroke="currentColor" strokeWidth="2.400" /></Icon></Cell>
            <Cell>
              <Icon w={16} h={17}>
                <path d="M9.500 1.500C6.500-.5 5.500 3 5 7s-1.500 10-4.500 8.500M2 6h6" fill="none" stroke="currentColor" strokeWidth="1.500" />
                <path d="M8 6.500q2 0 3 4t4 4M15.500 6L8 14.500" fill="none" stroke="currentColor" strokeWidth="1.400" />
              </Icon>
            </Cell>
            <Cell><FilmIcon /></Cell>
            <Cell><BlurIcon /></Cell>
            <Cell>
              <Icon w={15} h={15}>
                <circle cx="7.500" cy="7.500" r="6.500" fill="none" stroke="currentColor" strokeWidth="1.700" />
                <path d="M12.500 3A6.500 6.500 0 0 0 3 12.500z" />
              </Icon>
            </Cell>
            <Cell>
              <Icon w={13} h={14}>
                <path d="M6.500 1L12 3.800v6.500L6.500 13 1 10.300V3.800zM1 3.800l5.500 2.700L12 3.800M6.500 6.500V13" fill="none" stroke="currentColor" strokeWidth="1.400" />
              </Icon>
            </Cell>
          </SwitchCells>
        </ColHead>
        <ColHead>Parent &amp; Link</ColHead>
      </HeadRow>

      <Row $on $h={23}>
        <AvCells>
          <Cell $bg="#313131"><EyeIcon /></Cell>
          <Cell />
          <Cell $bg="#333" />
          <Cell $bg="#333" />
        </AvCells>
        <LabelCell><Chevron open /><Bar /></LabelCell>
        <LayerNumber>1</LayerNumber>
        <LayerName>
          <StarShape size={17} />
          <input aria-label="Layer name" defaultValue="Shape Layer 1" />
        </LayerName>
        <SwitchCells $ml={6}>
          <Cell $bg="#333"><ShyIcon /></Cell>
          <Cell $bg="#333" $dim><SunIcon /></Cell>
          <Cell $bg="#333"><Icon w={14} h={14}><path d="M0 14L14 0" stroke="currentColor" strokeWidth="2" /></Icon></Cell>
          <Cell />
          <Cell />
          <Cell $bg="#3b3b3b" />
          <Cell $bg="#3b3b3b" />
          <Cell $bg="#3b3b3b" />
        </SwitchCells>
        <Parent>
          <Icon w={18} h={16}>
            <path
              d="M9 8c-1 1-2-.5-1-1.500C9.500 5 12 6 12 8.500s-3 4-5 3-3-4-2-6S9.500 1.500 12.500 2.500s5 4 3.500 7S11 15 7.500 15 1 11 1.500 7"
              fill="none" stroke="#9a9a9a" strokeWidth="1.400"
            />
          </Icon>
          <Select w={128} h={22} label="Parent" value="None" />
        </Parent>
      </Row>

      <PropRow>
        <PropName><Chevron open /><span>Contents</span></PropName>
        <PropValue $end>
          Add:
          <ToolButton $w={16} $h={18} aria-label="Add content"><PlayDot /></ToolButton>
        </PropValue>
      </PropRow>
      <PropRow>
        <PropEye><Cell $bg="#1d1d1d"><EyeIcon /></Cell></PropEye>
        <PropName $deep $on><Chevron /><span>Rectangle 1</span></PropName>
        <PropValue><Select w={181} h={22} label="Blend mode" value="Normal" /></PropValue>
      </PropRow>
      <PropRow>
        <PropName><Chevron /><span>Transform</span></PropName>
        <PropValue><a href="#reset">Reset</a></PropValue>
      </PropRow>
    </Outline>
  );
}

function TimeTracks() {
  const seconds = Array.from({ length: 14 }, (_, i) => (i === 0 ? '0:00s' : `${String(i).padStart(2, '0')}s`));
  return (
    <Tracks>
      <NavBar $h={14} $r={7}><span /></NavBar>
      <Ruler>
        <Ticks>{seconds.map((s) => <Tick key={s}>{s}</Tick>)}</Ticks>
      </Ruler>
      <NavBar $h={24} $r={4}><span /></NavBar>
      <Rendered />
      <TrackRow $on $h={23}><LayerBar /></TrackRow>
      <TrackArea>
        {[1, 2, 3].map((n) => (
          <TrackRow key={n}>
            <KeyMark>
              <Icon w={11} h={16}>
                <path d="M0 1h4l1.500 1L7 1h4M0 15h4l1.500-1L7 15h4M4 2v12M7 2v12" fill="none" stroke="currentColor" strokeWidth="1.600" />
              </Icon>
            </KeyMark>
          </TrackRow>
        ))}
      </TrackArea>
      <Playhead>
        <Icon w={17} h={18}>
          <path d="M0 0h17v8l-8.500 10L0 8z" fill={BLUE} />
          <path d="M6 9h5" stroke="#3b5d80" strokeWidth="2" />
        </Icon>
      </Playhead>
    </Tracks>
  );
}

function Timeline() {
  return (
    <TimelinePanel>
      <TimelineTab>
        <MenuButton $w={8} aria-label="Close Comp 1">
          <Icon w={8} h={8}><path d="M0 1l7 7M7 1L0 8" stroke="#8a8a8a" strokeWidth="1.500" /></Icon>
        </MenuButton>
        <Swatch $size={15} />
        <strong>Comp 1</strong>
        <Burger label="Comp 1 menu" />
      </TimelineTab>
      <TimelineBody>
        <LayerOutline />
        <TimeTracks />
        <Margin>
          <MarkerButton aria-label="Comp marker">
            <Icon w={17} h={20}><path d="M0 0h17v12l-8.500 8L0 12z" /></Icon>
          </MarkerButton>
          <MarkerButton aria-label="Comp button">
            <Icon w={21} h={18}>
              <path d="M11 3h10v11H11z" />
              <path d="M0 11L11 1v6M0 11h6" fill="none" stroke="currentColor" strokeWidth="1.800" />
              <circle cx="9.500" cy="12" r="4.500" fill="#272727" stroke="currentColor" strokeWidth="1.800" />
            </Icon>
          </MarkerButton>
        </Margin>
      </TimelineBody>
      <StatusBar>
        <ViewButton $w={27} aria-label="Layer switches">
          <Icon w={17} h={17}>
            <g fill="#272727" stroke={BLUE} strokeWidth="1.500">
              <path d="M1 1h8v8H1zM4 4h8v8H4zM7.500 7.500h8.500V16H7.500z" />
              <path d="M11 11h2v2h-2z" />
            </g>
          </Icon>
        </ViewButton>
        <ViewButton $w={28} aria-label="Transfer controls">
          <Icon w={17} h={16}>
            <circle cx="6" cy="6" r="5" fill="none" stroke="currentColor" strokeWidth="1.700" />
            <path d="M6 6h9.500v9H6z" fill="none" stroke="currentColor" strokeWidth="1.700" />
            <path d="M6 6h5l-1 4-4 1z" />
          </Icon>
        </ViewButton>
        <ViewButton $w={26} aria-label="In and out">
          <Icon w={16} h={16}>
            <path d="M6 1H4v5L1 8l3 2v5h2M10 1h2v5l3 2-3 2v5h-2" fill="none" stroke="currentColor" strokeWidth="2" />
          </Icon>
        </ViewButton>
        <ViewButton $w={30} aria-label="Render time">
          <Icon w={19} h={14}>
            <path d="M0 5a5.500 5.500 0 0 1 11 0c0 2-1 3-1 4 5 1 6-2 5-5l-2-4 3 3 1-3 1 4c1 4-1 10-5 10H1l3-4C1 9 0 8 0 5z" />
          </Icon>
        </ViewButton>
        <RenderTime>Frame Render Time <strong>5ms</strong></RenderTime>
        <ToggleButton>Toggle Switches / Modes</ToggleButton>
        <Icon w={14} h={6}><path d="M0 6l4-4 1.500 1L9 0l5 6z" fill="#b4b4b4" /></Icon>
        <ZoomSlider type="range" min="0" max="100" defaultValue="0" aria-label="Timeline zoom" />
        <Icon w={23} h={10}><path d="M0 9l7-8 1.500 1L3 9zM6 10l9-10 8 10z" fill="#b4b4b4" /></Icon>
      </StatusBar>
    </TimelinePanel>
  );
}

export default function App() {
  return (
    <Shell>
      <GlobalStyle />
      <TopBar />
      <Workspace>
        <Project />
        <Composition />
        <SidePanels />
      </Workspace>
      <Timeline />
    </Shell>
  );
}
